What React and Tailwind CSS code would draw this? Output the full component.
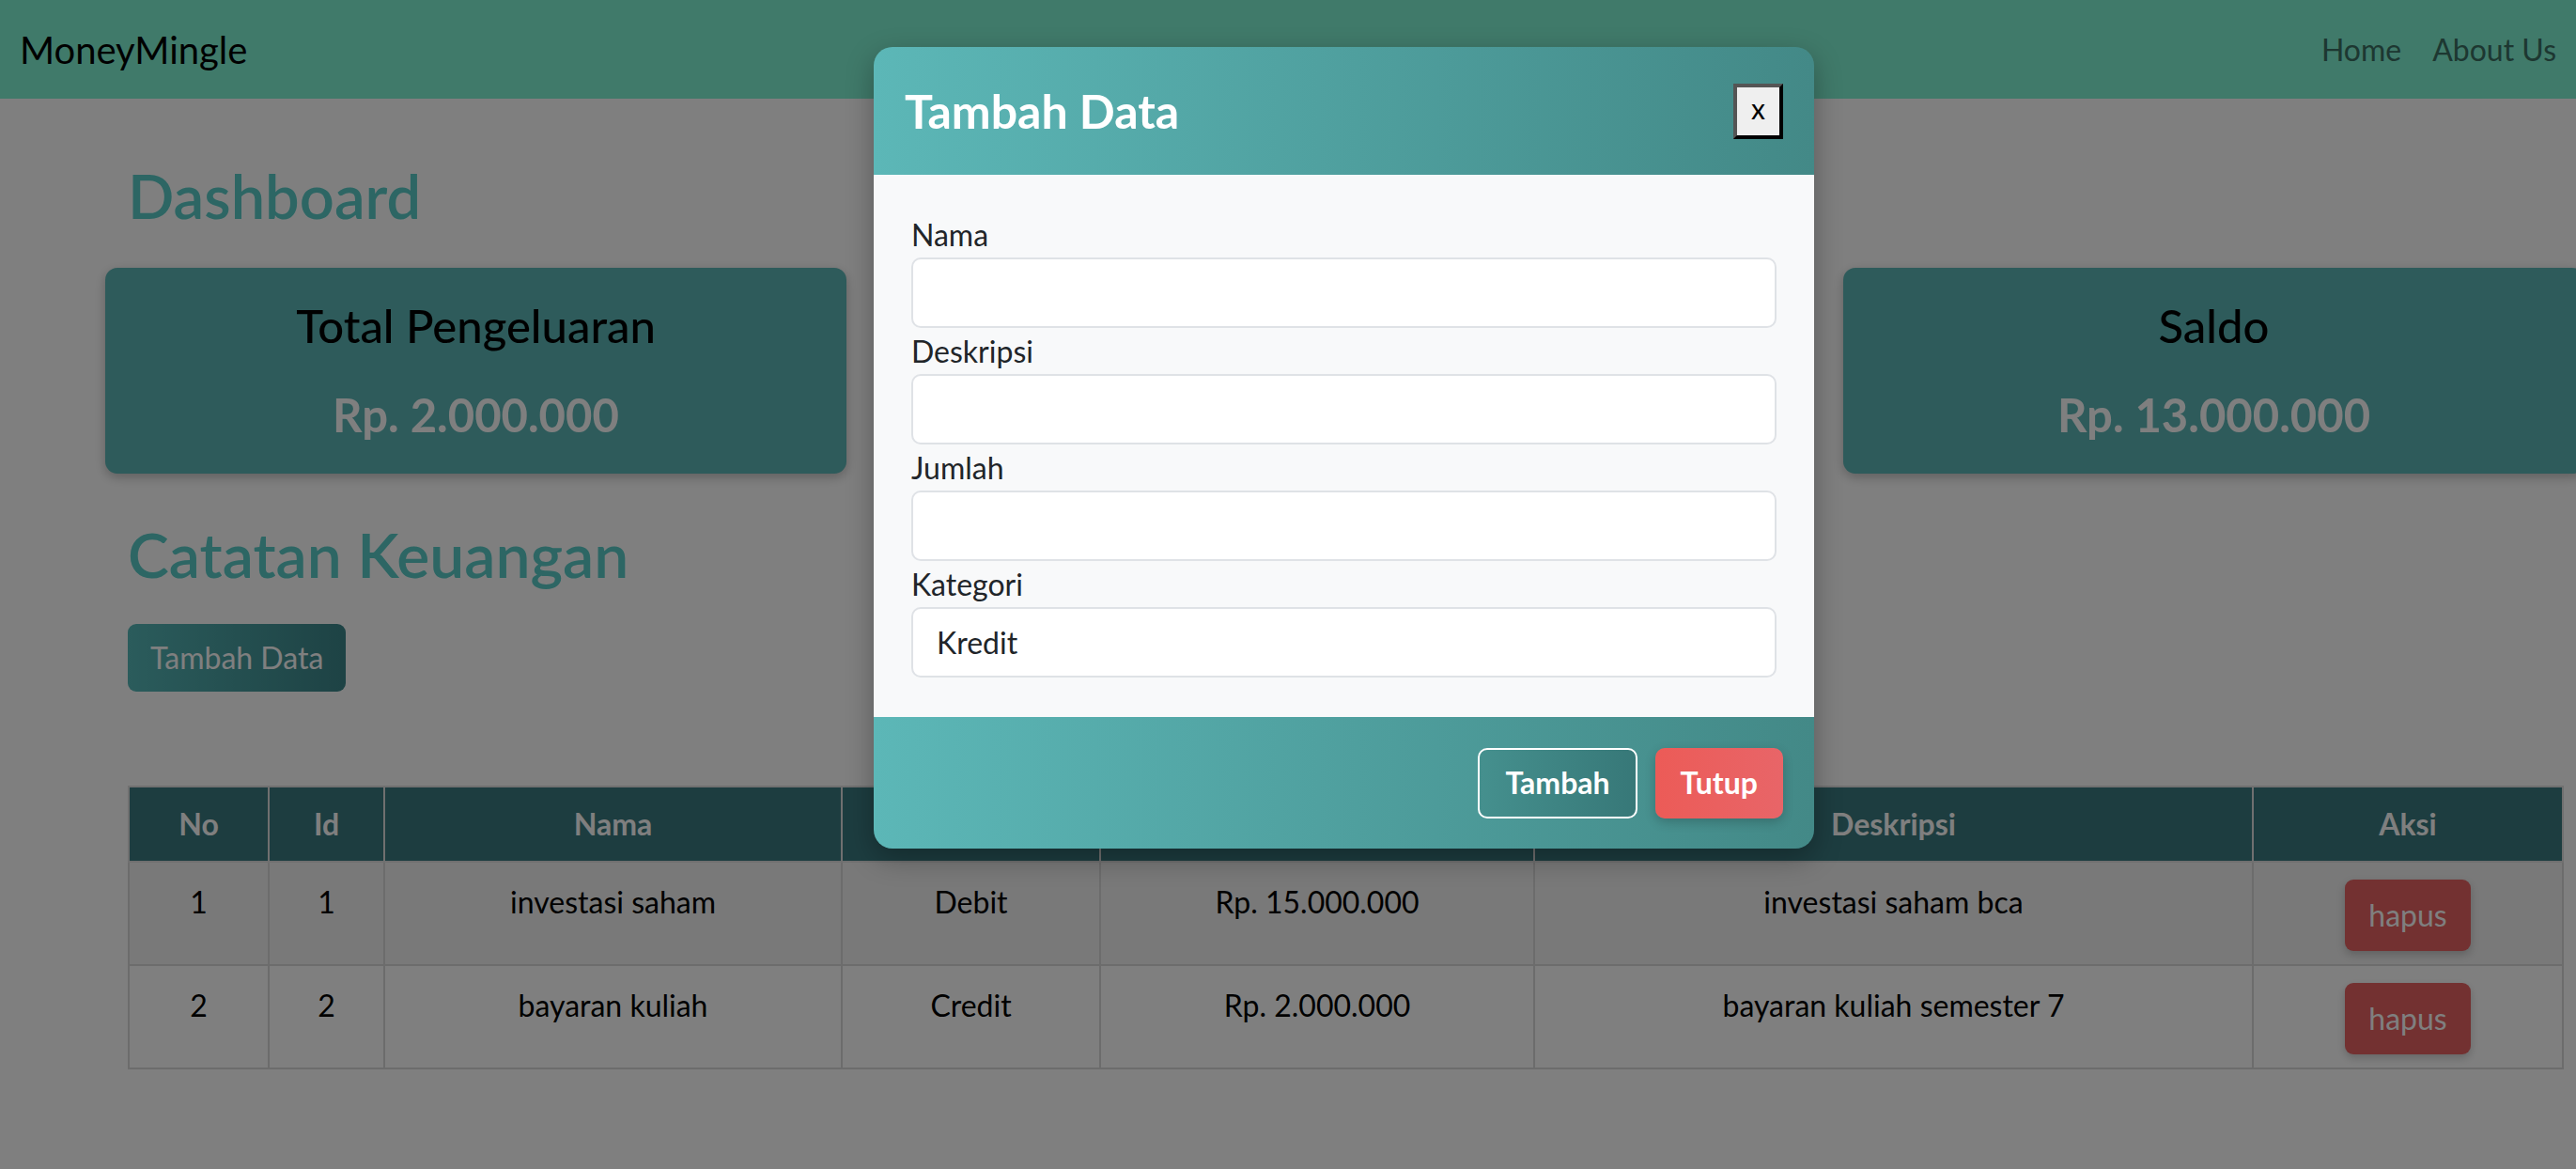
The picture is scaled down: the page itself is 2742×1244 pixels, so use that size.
import React from 'react'

const CARDS = [
  { title: 'Total Pengeluaran', amount: 'Rp. 2.000.000' },
  { title: 'Total Pemasukan', amount: 'Rp. 15.000.000' },
  { title: 'Saldo', amount: 'Rp. 13.000.000' },
]

const ROWS = [
  { no: 1, id: 1, nama: 'investasi saham', kategori: 'Debit', jumlah: 'Rp. 15.000.000', deskripsi: 'investasi saham bca' },
  { no: 2, id: 2, nama: 'bayaran kuliah', kategori: 'Credit', jumlah: 'Rp. 2.000.000', deskripsi: 'bayaran kuliah semester 7' },
]

const FIELDS = ['Nama', 'Deskripsi', 'Jumlah']

function Field({ label, children }) {
  return (
    <div className="mb-[4px]">
      <label className="mb-[3px] block text-[32px] leading-[42px] text-[#212529]">{label}</label>
      {children}
    </div>
  )
}

export default function App() {
  return (
    <div className="relative h-[1244px] w-full overflow-hidden bg-white font-['Lato',sans-serif] text-black">
      {/* Navbar */}
      <nav className="flex h-[105px] items-center justify-between bg-[#80f4d4] px-[21px]">
        <span className="text-[40px] text-black">MoneyMingle</span>
        <div className="flex items-center gap-[33px] text-[32px] text-[#3a6e62]">
          <a>Home</a>
          <a>About Us</a>
        </div>
      </nav>

      <main className="px-[136px]">
        <h1 className="mt-[65px] text-[65px] font-semibold leading-[77px] text-[#5acdc8]">Dashboard</h1>

        {/* Summary cards */}
        <div className="-mx-[24px] mt-[38px] flex gap-[136px]">
          {CARDS.map((c) => (
            <div
              key={c.title}
              className="h-[219px] w-[789px] shrink-0 rounded-[13px] bg-[#5cb6b6] pt-[33px] text-center shadow-[0_4px_12px_rgba(0,0,0,0.25)]"
            >
              <p className="text-[49px] font-medium leading-[56px] text-black">{c.title}</p>
              <p className="mt-[38px] text-[49px] font-bold leading-[58px] text-white">{c.amount}</p>
            </div>
          ))}
        </div>

        <h2 className="mt-[47px] text-[66px] font-semibold leading-[77px] text-[#5acdc8]">Catatan Keuangan</h2>

        <button className="mt-[36px] h-[72px] rounded-[9px] bg-linear-to-r from-[#56b8b8] to-[#3c868a] px-[24px] text-[32px] text-white">
          Tambah Data
        </button>

        {/* Table */}
        <table className="mt-[100px] w-[2591px] table-fixed border-collapse border-2 border-[#dcdcdc] text-center text-[32px]">
          <colgroup>
            <col className="w-[149px]" />
            <col className="w-[123px]" />
            <col className="w-[487px]" />
            <col className="w-[275px]" />
            <col className="w-[462px]" />
            <col className="w-[765px]" />
            <col className="w-[330px]" />
          </colgroup>
          <thead>
            <tr className="bg-[#3a7a80] text-white">
              {['No', 'Id', 'Nama', 'Kategori', 'Jumlah', 'Deskripsi', 'Aksi'].map((h) => (
                <th key={h} className="h-[80px] border-2 border-[#e0e0e0] font-bold leading-[48px]">
                  {h}
                </th>
              ))}
            </tr>
          </thead>
          <tbody>
            {ROWS.map((r, i) => (
              <tr key={r.no} className={i === 0 ? 'bg-[#f2f2f2]' : 'bg-white'}>
                {[r.no, r.id, r.nama, r.kategori, r.jumlah, r.deskripsi].map((v, j) => (
                  <td key={j} className="border-2 border-[#d8d8d8] pt-[18px] pb-[14px] align-top leading-[48px]">
                    {v}
                  </td>
                ))}
                <td className="border-2 border-[#d8d8d8] pt-[18px] pb-[14px] align-top">
                  <button className="h-[76px] rounded-[9px] bg-[#e66262] px-[25px] text-[32px] text-white shadow-[0_4px_10px_rgba(0,0,0,0.2)]">
                    hapus
                  </button>
                </td>
              </tr>
            ))}
          </tbody>
        </table>
      </main>

      {/* Backdrop */}
      <div className="absolute inset-0 bg-black/50" />

      {/* Modal */}
      <div className="absolute left-[930px] top-[50px] w-[1001px] overflow-hidden rounded-[20px] shadow-[0_10px_30px_rgba(0,0,0,0.3)]">
        <div className="flex h-[136px] items-center justify-between bg-linear-to-r from-[#5cb7b7] to-[#438987] px-[33px]">
          <h3 className="text-[50px] font-bold text-white">Tambah Data</h3>
          <button className="flex h-[59px] w-[53px] items-center justify-center border-[4px] border-t-[#555] border-l-[#555] border-r-black border-b-black bg-[#efefef] pb-[6px] text-[30px] leading-none text-black">
            x
          </button>
        </div>

        <div className="bg-[#f8f9fa] px-[40px] pt-[43px] pb-[38px]">
          {FIELDS.map((f) => (
            <Field key={f} label={f}>
              <input className="block h-[75px] w-full rounded-[10px] border-2 border-[#dfe2e6] bg-white px-[25px] text-[32px]" />
            </Field>
          ))}
          <Field label="Kategori">
            <select className="block h-[75px] w-full appearance-none rounded-[10px] border-2 border-[#dfe2e6] bg-white px-[25px] text-[32px] text-[#212529]">
              <option>Kredit</option>
              <option>Debit</option>
            </select>
          </Field>
        </div>

        <div className="flex h-[140px] items-center justify-end gap-[19px] bg-linear-to-r from-[#5cb7b7] to-[#438987] pr-[33px]">
          <button className="h-[75px] rounded-[10px] border-2 border-white bg-linear-to-r from-[#45908e] to-[#377878] px-[27px] text-[32px] font-bold text-white">
            Tambah
          </button>
          <button className="h-[75px] rounded-[10px] bg-linear-to-r from-[#ec5b57] to-[#e86568] px-[27px] text-[32px] font-bold text-white shadow-[0_4px_12px_rgba(0,0,0,0.2)]">
            Tutup
          </button>
        </div>
      </div>
    </div>
  )
}
